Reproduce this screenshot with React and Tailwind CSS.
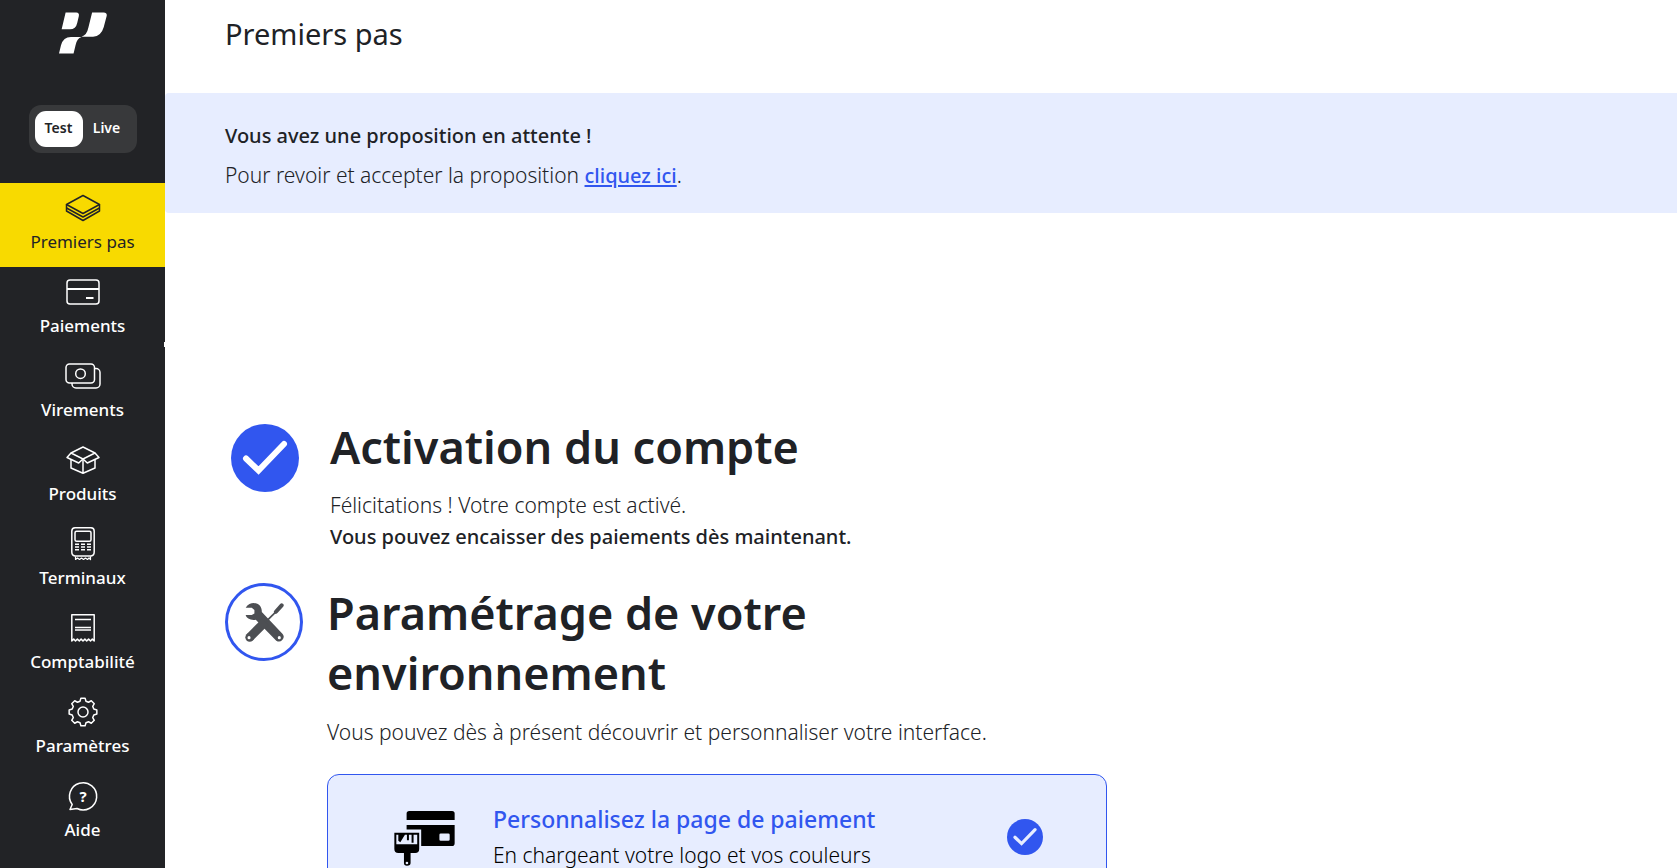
import React, { useState } from 'react';

const GearShape = () => {
    const points = [];
    for (let i = 0; i < 8; i++) {
        const base = (i * Math.PI) / 4;
        [[-0.27, 11.2], [-0.15, 14], [0.15, 14], [0.27, 11.2]].forEach(([offset, radius]) => {
            points.push(`${18 + radius * Math.sin(base + offset)},${18 - radius * Math.cos(base + offset)}`);
        });
    }
    return <polygon points={points.join(' ')} />;
};

const icons = {
    layers: (
        <>
            <path d="M18 5.5 34.5 14.5 18 23.5 1.5 14.5Z" />
            <path d="M1.5 14.5V21L18 30.5 34.5 21V14.5" />
            <path d="M1.5 18 18 27 34.5 18" />
        </>
    ),
    card: (
        <>
            <rect x="2" y="6" width="32" height="24" rx="3" />
            <path d="M2 15H34M21 24H28.5" strokeWidth="2" />
        </>
    ),
    cash: (
        <>
            <rect x="1" y="6" width="28.5" height="19" rx="3.5" />
            <circle cx="15.5" cy="15.7" r="4.8" />
            <path d="M29.5 10.5H31a4 4 0 0 1 4 4V26a4 4 0 0 1-4 4H11a4 4 0 0 1-4-4v-1" />
        </>
    ),
    box: (
        <>
            <path d="M18 5 30 11 18 17 6 11Z" />
            <path d="M6 11 2 15.5 13.7 21 18 17 22.3 21 34 15.5 30 11" />
            <path d="M6 17.5V26L18 31.3 30 26V17.5M18 17V31.3" />
        </>
    ),
    terminal: (
        <>
            <path d="M10 1.8H26A3.3 3.3 0 0 1 29.2 5V26A4 4 0 0 1 26 30H10A4 4 0 0 1 6.8 26V5A3.3 3.3 0 0 1 10 1.8Z" />
            <rect x="10" y="5.3" width="16" height="10" rx="1.5" />
            <path d="M10 18.3h4M16 18.3h4M22 18.3h4M10 21h4M16 21h4M22 21h4M10 23.8h4M16 23.8h4M22 23.8h4" />
            <path d="M10.5 30.5V33.5L12.5 32 14.5 33.5 16.5 32 18.5 33.5 20.5 32 22.5 33.5 24 32 25.5 33.5V30.5" strokeWidth="1.2" />
        </>
    ),
    receipt: (
        <>
            <path d="M6.8 4.8H29.2V31L27.3 29 25.5 31 23.6 29 21.7 31 19.9 29 18 31 16.1 29 14.3 31 12.4 29 10.5 31 8.7 29 6.8 31Z" />
            <path d="M10 9.5H26M10 17.5H26M10 20H26" />
        </>
    ),
    gear: (
        <>
            <GearShape />
            <circle cx="18" cy="18" r="5" />
        </>
    ),
    help: (
        <>
            <path d="M5 31.5 7.2 26.5A13.6 13.6 0 1 1 12 30.5Z" />
            <text x="18" y="23.5" textAnchor="middle" fontSize="15" fontWeight="700" fill="currentColor" stroke="none">?</text>
        </>
    ),
};

const navItems = [
    { label: 'Premiers pas', icon: 'layers' },
    { label: 'Paiements', icon: 'card' },
    { label: 'Virements', icon: 'cash' },
    { label: 'Produits', icon: 'box' },
    { label: 'Terminaux', icon: 'terminal' },
    { label: 'Comptabilité', icon: 'receipt' },
    { label: 'Paramètres', icon: 'gear' },
    { label: 'Aide', icon: 'help' },
];

const Logo = () => (
    <svg viewBox="27 21 145 126" className="w-12 h-[42px]" fill="#fff" aria-hidden="true">
        <path d="M47 22H79Q89 22 87 33L82 54Q78 73 60 73H35Z" />
        <path d="M127 22H162Q173 22 171 33L162 67Q154 95 130 95H95Q111 92 116 67Z" />
        <path d="M27 146 33 121Q40 96 63 96H95Q81 100 77 121L71 146Z" />
    </svg>
);

const CheckBadge = ({ className }) => (
    <svg viewBox="0 0 68 68" className={className} fill="none" aria-hidden="true">
        <circle cx="34" cy="34" r="34" fill="#3156ef" />
        <path d="M15 34.5 27.5 46.5 53 20" stroke="currentColor" strokeWidth="6" strokeLinecap="round" strokeLinejoin="miter" />
    </svg>
);

const ToolsIcon = () => (
    <svg viewBox="0 0 116 116" className="w-[39px] h-[39px]" fill="none" aria-hidden="true">
        <path d="M2 14C8 4 18 0 26 0C42 1 51 12 50 27L112 92A14 14 0 0 1 93 112L32 50C18 53 4 46 2 36L20 36L28 31V21L20 14Z" fill="#4d4f53" />
        <path d="M64 54 94 24" stroke="#4d4f53" strokeWidth="5" />
        <path d="M92 26 109 7" stroke="#4d4f53" strokeWidth="12" strokeLinecap="round" />
        <path d="M60 56 14 102" stroke="#4d4f53" strokeWidth="26" />
        <circle cx="14" cy="102" r="13" fill="#4d4f53" />
        <circle cx="12" cy="103" r="4.5" fill="#fff" />
        <circle cx="102" cy="103" r="4.5" fill="#fff" />
    </svg>
);

const BrushCardIcon = () => (
    <svg viewBox="0 0 182 166" className="w-[61px] h-[55px] shrink-0" aria-hidden="true">
        <path d="M37 27V8Q37 0 45 0H174Q182 0 182 8V27Z" />
        <path fillRule="evenodd" d="M37 42H182V97Q182 106 173 106H81V56H37ZM140 68Q136 68 136 72V86Q136 90 140 90H163Q167 90 167 86V72Q167 68 163 68Z" />
        <path fillRule="evenodd" d="M0 66H75V115Q75 127 63 127H49V157Q49 165 38 165Q29 165 29 157V127H12Q0 127 0 115ZM6 72V100H69V72H58V96H52V72H44V88H38V72H32L18 94 12 90V72ZM38 153A4 4 0 1 0 38 161A4 4 0 1 0 38 153Z" />
    </svg>
);

const Sidebar = () => {
    const [mode, setMode] = useState('Test');

    return (
        <aside className="relative w-[165px] shrink-0 bg-[#222326] text-white flex flex-col">
            <div className="flex flex-col items-center pt-3 pb-[30px]">
                <Logo />
                <div className="mt-[51px] flex items-center rounded-xl bg-[#38393b] p-[6px] w-[108px] h-12 text-[14px] leading-5 font-semibold">
                    {['Test', 'Live'].map(name => (
                        <button
                            key={name}
                            onClick={() => setMode(name)}
                            className={mode === name ? 'w-12 h-9 pb-[2px] rounded-[11px] bg-white text-[#222326]' : 'w-12 h-9 pb-[2px] rounded-[11px]'}
                        >
                            {name}
                        </button>
                    ))}
                </div>
            </div>

            <nav>
                {navItems.map((item, i) => (
                    <a
                        key={item.label}
                        href="#"
                        className={`flex flex-col items-center gap-1 h-[84px] pt-[7px] text-[17px] leading-6 ${i === 0 ? 'bg-[#f8da00] text-[#222326] font-normal' : 'font-medium'}`}
                    >
                        <svg viewBox="0 0 36 36" className="w-9 h-9" fill="none" stroke="currentColor" strokeWidth="1.5" strokeLinejoin="round" aria-hidden="true">
                            {icons[item.icon]}
                        </svg>
                        {item.label}
                    </a>
                ))}
            </nav>

            {/* Resize handle */}
            <span className="absolute right-0 top-[342px] w-px h-[5px] bg-white" />
        </aside>
    );
};

export default function App() {
    return (
        <div className="flex h-screen overflow-hidden bg-white text-[#202226] font-['Noto_Sans',sans-serif]">
            <Sidebar />

            <main className="flex-1 min-w-0">
                <header className="h-[93px] pl-[60px] pt-[14px]">
                    <h1 className="text-[29px] leading-10">Premiers pas</h1>
                </header>

                {/* Pending proposal */}
                <section className="flex flex-col gap-[7px] rounded-l bg-[#e7edff] pl-[60px] pt-[27px] pb-[22px] leading-8">
                    <p className="text-[20px] font-medium">Vous avez une proposition en attente !</p>
                    <p className="h-8 text-[21px] font-light">
                        Pour revoir et accepter la proposition{' '}
                        <a href="#" className="text-[20px] font-medium text-[#3156ef] underline decoration-2 underline-offset-2">cliquez ici</a>.
                    </p>
                </section>

                <div className="pl-[60px] pt-[204px]">
                    {/* Account activation */}
                    <section className="flex items-start gap-[31px] pl-[6px]">
                        <CheckBadge className="w-[68px] h-[68px] mt-[7px] shrink-0 text-white" />
                        <div>
                            <h2 className="text-[45px] leading-[60px] font-semibold">Activation du compte</h2>
                            <div className="mt-3 leading-8">
                                <p className="text-[21px] font-light">Félicitations ! Votre compte est activé.</p>
                                <p className="text-[20px] font-medium">Vous pouvez encaisser des paiements dès maintenant.</p>
                            </div>
                        </div>
                    </section>

                    {/* Environment setup */}
                    <section className="mt-[30px] flex items-start gap-6">
                        <div className="w-[78px] h-[78px] shrink-0 rounded-full border-3 border-[#3156ef] flex items-center justify-center">
                            <ToolsIcon />
                        </div>
                        <div className="w-full max-w-[780px]">
                            <h2 className="text-[45px] leading-[60px] font-semibold">Paramétrage de votre environnement</h2>
                            <p className="mt-[13px] text-[21px] leading-8 font-light">Vous pouvez dès à présent découvrir et personnaliser votre interface.</p>

                            <a href="#" className="mt-[26px] flex items-start rounded-xl border border-[#3156ef] bg-[#e7edff] pl-[66px] pr-[63px] pt-7 pb-7">
                                <span className="mt-2"><BrushCardIcon /></span>
                                <span className="ml-[38px] flex-1 flex flex-col gap-1 leading-8">
                                    <span className="text-[23px] font-medium text-[#3156ef]">Personnalisez la page de paiement</span>
                                    <span className="text-[21px] font-light text-black">En chargeant votre logo et vos couleurs</span>
                                </span>
                                <CheckBadge className="w-9 h-9 mt-4 shrink-0 text-[#e7edff]" />
                            </a>
                        </div>
                    </section>
                </div>
            </main>
        </div>
    );
}
